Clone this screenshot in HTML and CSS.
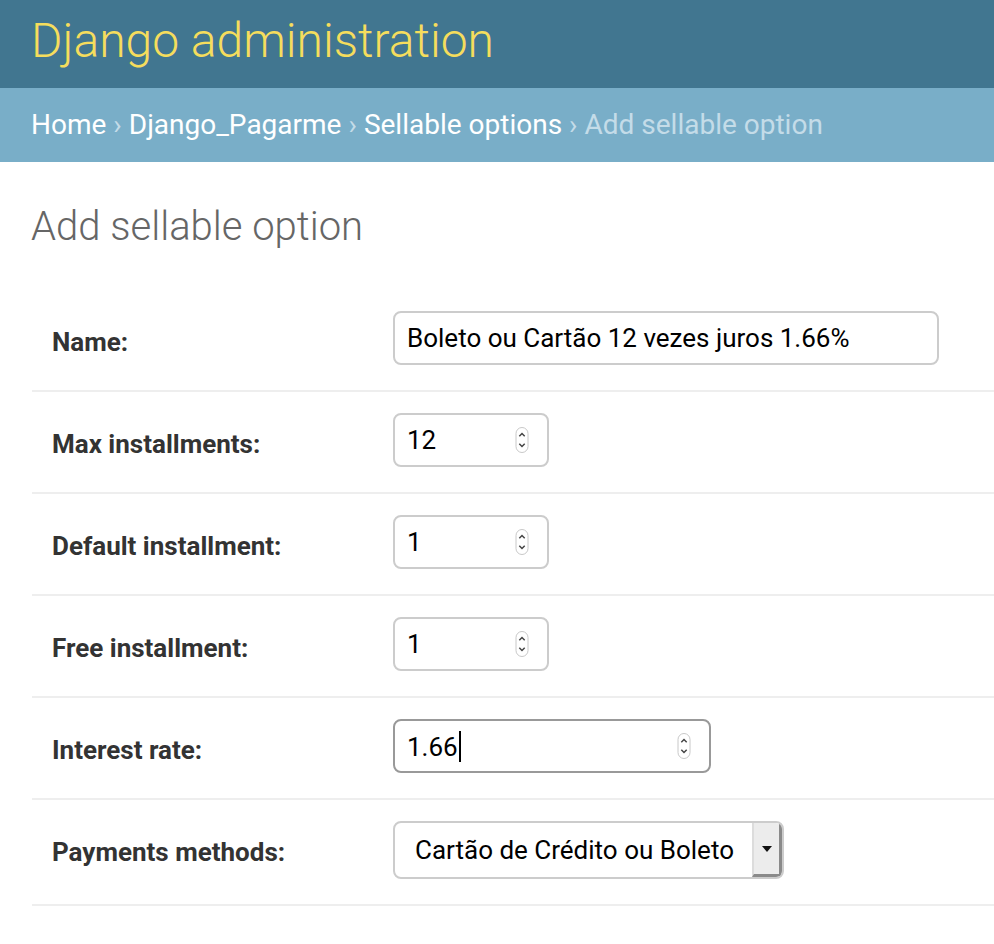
FILE: index.html
```html
<!DOCTYPE html>
<html lang="en">
<head>
<meta charset="utf-8">
<title>Add sellable option | Django site admin</title>
<link rel="stylesheet" href="styles.css">
</head>
<body>
<header class="header">
  <h1 class="branding">Django administration</h1>
</header>
<nav class="breadcrumbs">
  <a href="#">Home</a><span class="sep">›</span><a href="#">Django_Pagarme</a><span class="sep">›</span><a href="#">Sellable options</a><span class="sep">›</span><span class="current">Add sellable option</span>
</nav>
<main class="content">
  <h1 class="title">Add sellable option</h1>
  <form class="fieldset">
    <div class="row">
      <label class="label">Name:</label>
      <div class="field field-name"><span class="value">Boleto ou Cartão 12 vezes juros 1.66%</span></div>
    </div>
    <div class="row">
      <label class="label">Max installments:</label>
      <div class="field field-num"><span class="value">12</span>
        <svg class="spin" width="14" height="26" viewBox="0 0 14 26"><rect x="1" y="0.5" width="12" height="25" rx="6" fill="#fff" stroke="#c8c8c8"/><path d="M4.3 9.2 L7 6.5 L9.7 9.2" fill="none" stroke="#444" stroke-width="1.5"/><path d="M4.3 16.8 L7 19.5 L9.7 16.8" fill="none" stroke="#444" stroke-width="1.5"/></svg>
      </div>
    </div>
    <div class="row">
      <label class="label">Default installment:</label>
      <div class="field field-num"><span class="value">1</span>
        <svg class="spin" width="14" height="26" viewBox="0 0 14 26"><rect x="1" y="0.5" width="12" height="25" rx="6" fill="#fff" stroke="#c8c8c8"/><path d="M4.3 9.2 L7 6.5 L9.7 9.2" fill="none" stroke="#444" stroke-width="1.5"/><path d="M4.3 16.8 L7 19.5 L9.7 16.8" fill="none" stroke="#444" stroke-width="1.5"/></svg>
      </div>
    </div>
    <div class="row">
      <label class="label">Free installment:</label>
      <div class="field field-num"><span class="value">1</span>
        <svg class="spin" width="14" height="26" viewBox="0 0 14 26"><rect x="1" y="0.5" width="12" height="25" rx="6" fill="#fff" stroke="#c8c8c8"/><path d="M4.3 9.2 L7 6.5 L9.7 9.2" fill="none" stroke="#444" stroke-width="1.5"/><path d="M4.3 16.8 L7 19.5 L9.7 16.8" fill="none" stroke="#444" stroke-width="1.5"/></svg>
      </div>
    </div>
    <div class="row">
      <label class="label">Interest rate:</label>
      <div class="field field-rate focused"><span class="value">1.66<span class="caret"></span></span>
        <svg class="spin" width="14" height="26" viewBox="0 0 14 26"><rect x="1" y="0.5" width="12" height="25" rx="6" fill="#fff" stroke="#c8c8c8"/><path d="M4.3 9.2 L7 6.5 L9.7 9.2" fill="none" stroke="#444" stroke-width="1.5"/><path d="M4.3 16.8 L7 19.5 L9.7 16.8" fill="none" stroke="#444" stroke-width="1.5"/></svg>
      </div>
    </div>
    <div class="row">
      <label class="label">Payments methods:</label>
      <div class="field field-select"><span class="value">Cartão de Crédito ou Boleto</span>
        <span class="drop"><svg width="10" height="6" viewBox="0 0 10 6"><path d="M0 0 H10 L5 6 Z" fill="#111"/></svg></span>
      </div>
    </div>
  </form>
</main>
</body>
</html>
```
FILE: styles.css
```css
* { box-sizing: border-box; }
html, body { margin: 0; padding: 0; background: #fff; }
body { font-family: Roboto, "Liberation Sans", Arial, sans-serif; color: #333; }

.header {
  height: 88px;
  background: #417690;
  padding: 13px 31px 0;
}
.branding {
  margin: 0;
  font-size: 48px;
  line-height: 56px;
  font-weight: 300;
  color: #f5dd5d;
}

.breadcrumbs {
  height: 74px;
  background: #79aec8;
  padding: 21px 31px 0;
  font-size: 28px;
  line-height: 32px;
  color: #c4dce8;
  white-space: nowrap;
}
.breadcrumbs a { color: #fff; text-decoration: none; }
.breadcrumbs .sep { color: #c4dce8; margin: 0 7px; }
.breadcrumbs .current { color: #c4dce8; }

.content { padding: 41px 0 0 32px; }
.title {
  margin: 0 0 39px -1px;
  font-size: 40px;
  line-height: 48px;
  font-weight: 300;
  color: #666;
}

.fieldset { margin: 0; }
.row {
  display: flex;
  align-items: flex-start;
  padding: 21px 20px 25px 20px;
  border-bottom: 2px solid #eee;
}
.label {
  width: 341px;
  flex: none;
  padding-top: 15px;
  font-size: 26px;
  line-height: 32px;
  font-weight: 700;
  color: #333;
}
.field {
  display: flex;
  align-items: center;
  height: 54px;
  border: 2px solid #ccc;
  border-radius: 8px;
  padding: 0 18px 0 12px;
  font-size: 26px;
  color: #000;
  background: #fff;
}
.field .value { flex: 1; white-space: nowrap; }
.field-name { width: 546px; }
.field-num { width: 156px; }
.field-rate { width: 318px; }
.focused { border-color: #999; }
.caret {
  display: inline-block;
  width: 2px;
  height: 31px;
  background: #000;
  vertical-align: -6px;
  margin-left: 1px;
}
.spin { flex: none; display: block; }

.field-select {
  width: 391px;
  height: 58px;
  padding: 0 0 0 20px;
  overflow: hidden;
}
.drop {
  flex: none;
  align-self: stretch;
  width: 30px;
  background: #ececec;
  border-left: 2px solid #dcdcdc;
  border-right: 3px solid #8a8a8a;
  border-bottom: 3px solid #8a8a8a;
  display: flex;
  align-items: center;
  justify-content: center;
}
```
